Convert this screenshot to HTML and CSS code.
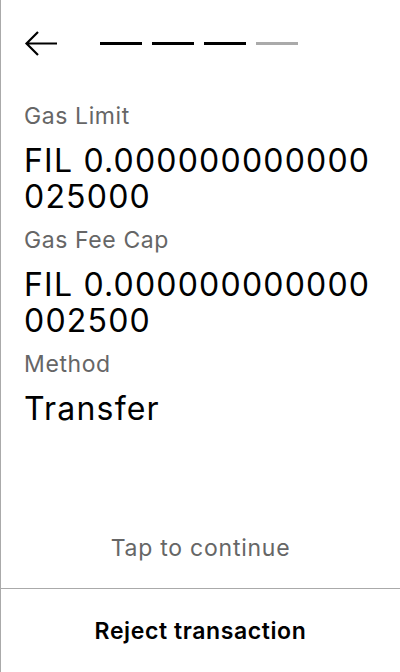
FILE: index.html
```html
<!DOCTYPE html>
<html>
<head>
<meta charset="utf-8">
<link rel="stylesheet" href="styles.css">
</head>
<body>
<div class="screen">
  <div class="header">
    <svg class="back" width="34" height="28" viewBox="0 0 34 28">
      <path d="M33 13.5H3M14 2L2.5 13.5L14 25" fill="none" stroke="#000" stroke-width="2.2"/>
    </svg>
    <div class="steps">
      <span class="step on"></span>
      <span class="step on"></span>
      <span class="step on"></span>
      <span class="step"></span>
    </div>
  </div>
  <div class="content">
    <div class="field">
      <div class="label">Gas Limit</div>
      <div class="value">FIL 0.000000000000025000</div>
    </div>
    <div class="field">
      <div class="label">Gas Fee Cap</div>
      <div class="value">FIL 0.000000000000002500</div>
    </div>
    <div class="field">
      <div class="label">Method</div>
      <div class="value">Transfer</div>
    </div>
  </div>
  <div class="tap">Tap to continue</div>
  <div class="reject">Reject transaction</div>
</div>
</body>
</html>
```
FILE: styles.css
```css
* { box-sizing: border-box; }
html, body { margin: 0; padding: 0; background: #fff; }
body { font-family: Inter, "Noto Sans", sans-serif; color: #000; }
.screen {
  width: 400px;
  height: 672px;
  border-left: 1px solid #aaa;
  display: flex;
  flex-direction: column;
}
.header {
  display: flex;
  align-items: center;
  padding: 29px 0 0 23px;
  height: 58px;
}
.back { display: block; }
.steps {
  display: flex;
  gap: 10px;
  margin-left: 42px;
}
.step {
  width: 42px;
  height: 3px;
  background: #aaa;
}
.step.on { background: #000; }
.content {
  flex: 1;
  padding: 44px 24px 0 23px;
  display: flex;
  flex-direction: column;
  gap: 11px;
}
.label {
  font-size: 23px;
  line-height: 28px;
  letter-spacing: 0.6px;
  color: #666;
}
.value {
  font-size: 32px;
  line-height: 36px;
  letter-spacing: 1.2px;
  margin-top: 13px;
  word-break: break-all;
}
.tap {
  text-align: center;
  font-size: 23px;
  line-height: 28px;
  letter-spacing: 0.75px;
  color: #666;
  padding-bottom: 26px;
}
.reject {
  border-top: 1px solid #aaa;
  height: 84px;
  display: flex;
  align-items: center;
  justify-content: center;
  font-size: 23px;
  letter-spacing: 0.6px;
  font-weight: 600;
}
```
